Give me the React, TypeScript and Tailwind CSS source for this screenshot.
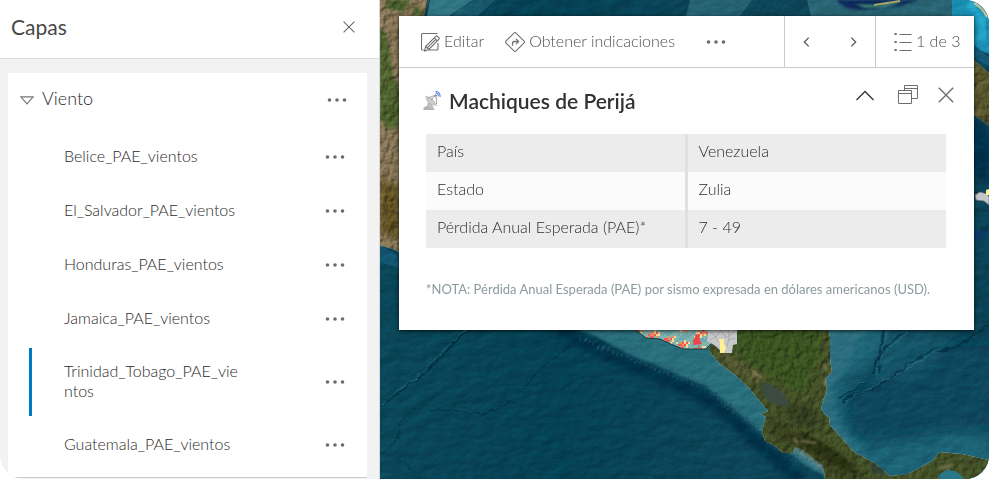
import React from "react";

const layers = [
  { name: "Belice_PAE_vientos" },
  { name: "El_Salvador_PAE_vientos" },
  { name: "Honduras_PAE_vientos" },
  { name: "Jamaica_PAE_vientos" },
  { name: "Trinidad_Tobago_PAE_vientos", selected: true },
  { name: "Guatemala_PAE_vientos" },
];

const facts = [
  ["País", "Venezuela"],
  ["Estado", "Zulia"],
  ["Pérdida Anual Esperada (PAE)*", "7 - 49"],
];

function Dots() {
  return (
    <svg width="20" height="6" viewBox="0 0 20 6" fill="currentColor" aria-hidden="true">
      <circle cx="2.5" cy="3" r="1.8" />
      <circle cx="10" cy="3" r="1.8" />
      <circle cx="17.5" cy="3" r="1.8" />
    </svg>
  );
}

function Cross({ size }: { size: number }) {
  return (
    <svg width={size} height={size} viewBox="0 0 16 16" fill="none" stroke="currentColor" strokeWidth="1.4" aria-hidden="true">
      <path d="M.8.8l14.4 14.4M15.2.8L.8 15.2" />
    </svg>
  );
}

function EditIcon() {
  return (
    <svg className="text-[#6e6e6e]" width="19" height="20" viewBox="0 0 19 20" fill="none" stroke="currentColor" strokeWidth="1.1" aria-hidden="true">
      <path d="M16.5 1.500h-15a1 1 0 0 0-1 1V17a1 1 0 0 0 1 1h1M7.5 18H16a1 1 0 0 0 1-1v-6" />
      <path d="M3.5 19l1.2-4.6L14.8 4.3q.8-.8 1.6 0l1.4 1.4q.8.8 0 1.6L7.7 17.5zM4.7 14.4l3 3M13.3 5.8l3 3M6.2 15.9l8.6-8.6M3.5 19l2.2-.6" />
    </svg>
  );
}

function DirectionsIcon() {
  return (
    <svg className="text-[#6e6e6e]" width="20" height="20" viewBox="0 0 20 20" fill="none" stroke="currentColor" strokeWidth="1.1" aria-hidden="true">
      <path d="M9.2.9q.8-.7 1.6 0l8.3 8.3q.7.8 0 1.6l-8.3 8.3q-.8.7-1.6 0L.9 10.8q-.7-.8 0-1.6z" />
      <path d="M7.5 13.8v-2.4q0-1.9 1.9-1.9h3.4" strokeWidth="1.3" />
      <path d="M11 7l2.7 2.5L11 12" />
    </svg>
  );
}

function ListIcon() {
  return (
    <svg className="text-[#6e6e6e]" width="18" height="20" viewBox="0 0 18 20" fill="none" stroke="currentColor" strokeWidth="1.2" aria-hidden="true">
      <path d="M5.5 2.500H17.500M5.500 10.500H17.500M5.500 18.500H17.500" />
      <path d="M.5 2h2.200M.5 10h2.200M.5 18h2.200" strokeWidth="2.200" />
    </svg>
  );
}

function WindowsIcon() {
  return (
    <svg width="20" height="20" viewBox="0 0 20 20" fill="none" stroke="currentColor" aria-hidden="true">
      <path d="M6.500 5.500V.5h13v13h-6M6.500 3.500h13" />
      <path d="M.5 5.500h13v13H.5zM.5 8.500h13" />
    </svg>
  );
}

function AntennaIcon() {
  return (
    <svg width="18" height="20" viewBox="0 0 18 20" fill="none" aria-hidden="true">
      <path d="M5 11l4 2 2 5H3z" fill="#c0c0c0" />
      <path d="M.5 19v-2.500l3-1.500 5 2.500 3 .5v1z" fill="#b4b4b4" />
      <path d="M3 5q-.5 8 10.500 9.500L9.500 8z" fill="#cdcdcd" stroke="#b0b0b0" strokeWidth=".7" />
      <path d="M8 9l5-5M5 7l8-3 .5 9" stroke="#999" strokeWidth=".9" />
      <circle cx="12.700" cy="4.500" r="1.100" fill="#888" />
      <path d="M12.500 2q3 0 3 3.300M12.500.5q5 .2 4.500 5.500" stroke="#4c82e8" strokeWidth="1.100" />
    </svg>
  );
}

function lossColor(col: number, row: number) {
  const v = Math.sin(col * 0.55 + row * 0.9) + Math.sin(col * 0.23 - row * 0.7) + Math.sin(col * 2.3 + row * 3.1) * 0.7;
  if (v > 1.7) return "#ee5a55";
  if (v > 1.2) return "#f08b68";
  if (v > 0.8) return "#f6dd8e";
  return v < -0.8 ? "#6ea9a9" : "#84b4ae";
}

function Mosaic() {
  const tiles = [];
  for (let row = 0; row < 13; row++) {
    for (let col = 0; col < 52; col++) {
      tiles.push(<rect key={`${row}-${col}`} x={234 + col * 2} y={326 + row * 2} width="2" height="2" fill={lossColor(col, row)} />);
    }
  }
  return <g clipPath="url(#municipal)">{tiles}</g>;
}

function SatelliteMap() {
  return (
    <svg
      className="absolute inset-0 h-full w-full"
      viewBox="0 0 609 479"
      preserveAspectRatio="xMinYMin slice"
      role="img"
      aria-label="Mapa satelital de Centroamérica"
    >
      <defs>
        <linearGradient id="sea" x1="0" y1="0" x2="1" y2="0">
          <stop offset="0" stopColor="#0a495b" />
          <stop offset=".3" stopColor="#054356" />
          <stop offset=".6" stopColor="#0e485c" />
          <stop offset="1" stopColor="#0b4458" />
        </linearGradient>
        <clipPath id="municipal">
          <path d="M242 325L256 330 266 338 280 339 293 345 303 349H326L332 343V325z" />
        </clipPath>
        <filter id="blur1"><feGaussianBlur stdDeviation="1" /></filter>
        <filter id="blur3"><feGaussianBlur stdDeviation="3" /></filter>
        <filter id="blur8"><feGaussianBlur stdDeviation="8" /></filter>
        <filter id="relief" x="0" y="0" width="100%" height="100%" colorInterpolationFilters="sRGB">
          <feTurbulence type="fractalNoise" baseFrequency=".06 .09" numOctaves="5" seed="8" />
          <feDiffuseLighting surfaceScale="1.300" diffuseConstant="1" lightingColor="#fff">
            <feDistantLight azimuth="230" elevation="27" />
          </feDiffuseLighting>
        </filter>
        <filter id="forest" x="0" y="0" width="100%" height="100%" colorInterpolationFilters="sRGB">
          <feTurbulence type="fractalNoise" baseFrequency=".16" numOctaves="4" seed="3" result="noise" />
          <feDiffuseLighting in="noise" surfaceScale="1.600" diffuseConstant="1" lightingColor="#fff" result="light">
            <feDistantLight azimuth="220" elevation="58" />
          </feDiffuseLighting>
          <feBlend in="SourceGraphic" in2="light" mode="multiply" />
          <feComposite in2="SourceGraphic" operator="in" />
        </filter>
        <filter id="rough" x="-10%" y="-10%" width="120%" height="120%">
          <feTurbulence type="fractalNoise" baseFrequency=".12" numOctaves="3" seed="4" />
          <feDisplacementMap in="SourceGraphic" scale="7" xChannelSelector="R" yChannelSelector="G" />
        </filter>
      </defs>

      <rect width="609" height="479" fill="url(#sea)" />

      {/* Caribbean depths */}
      <path d="M447 320H515L492 362 460 388 470 430 500 458 609 430V479H460L430 380z" fill="#226c7e" filter="url(#blur8)" />
      <path d="M470 402Q500 370 560 350L609 345V425L560 432 505 455 478 430z" fill="#0b4a60" filter="url(#blur8)" />
      <path d="M500 330H580L540 372 490 382z" fill="#1c6377" opacity=".6" filter="url(#blur8)" />
      <path d="M440 325H485L466 362 453 385 452 410 458 424 475 444 500 463 450 440 430 400z" fill="#2d7182" filter="url(#blur3)" />
      <path d="M478 446Q505 440 535 442L570 430 609 438V479H520z" fill="#1d6678" filter="url(#blur8)" />

      {/* Pacific shelf and trench */}
      <path d="M178 324L215 336 250 355 290 372 325 386 355 412 390 440 425 465 450 479V440L360 340 300 320z" fill="#2c6f7d" filter="url(#blur1)" />
      <path d="M168 320L195 338 240 361 290 381 320 395 345 412 370 436 395 458 420 479" fill="none" stroke="#03324a" strokeWidth="13" filter="url(#blur3)" />
      <path d="M200 338L245 356 290 374 325 388 355 412 390 440 420 463" fill="none" stroke="#1a5061" strokeWidth="5" strokeDasharray="2 3" opacity=".8" filter="url(#rough)" />

      {/* Submarine ridges */}
      <g fill="none" stroke="#02283a" filter="url(#rough)">
        <path d="M89 329L42 375 0 406" strokeWidth="1.500" opacity=".8" />
        <path d="M192 344L160 370 133 402 103 414 50 409" opacity=".7" />
        <path d="M35 407L20 424 18 438 0 455M17 459L38 473" opacity=".6" />
        <path d="M504 330L494 376 459 398M560 346L520 370 500 386 463 400M523 333L500 352 499 373M609 325L580 345 556 352" strokeWidth="2" opacity=".6" />
      </g>
      <g fill="none" stroke="#3b8796" opacity=".5" filter="url(#rough)">
        <path d="M87 328L40 373 0 405M507 331L497 374 461 395M560 349L520 373 464 402M527 333L504 352" />
      </g>

      {/* Yucatán corner */}
      <g filter="url(#forest)">
        <path d="M0 0H49L45 15 35 24 25 36V256L15 250 6 247 0 246z" fill="#a08d68" />
        <path d="M0 28L7 34 13 75 20 90V125L8 130 0 118z" fill="#5f7738" filter="url(#blur1)" />
        <path d="M0 180L20 186V240L0 232z" fill="#766429" filter="url(#blur3)" />
        <path d="M6 0H30L24 12 6 8zM35 4L45 16 33 15z" fill="#587337" filter="url(#blur1)" />
      </g>
      <path d="M50 0H93L69 16H47z" fill="#327785" />
      <path d="M93 0H115L98 16H70z" fill="#195b6d" />
      <path d="M48 0L45 16" stroke="#083543" strokeWidth="2" opacity=".7" />
      <path d="M0 247Q15 249 20 262V268L0 262z" fill="#1b6485" opacity=".6" />

      {/* Bahamas bank */}
      <path d="M310 0L306 16H360L372 0z" fill="#266474" />
      <path d="M427 0H575V17H431z" fill="#2a6675" />
      <path d="M457 0Q461 9 482 10L520 6 540 0z" fill="#0c2a5c" filter="url(#blur1)" />
      <path d="M474 4L500 5 527 0 507 7 486 8z" fill="#3f8775" filter="url(#blur1)" />
      <path d="M494 5L520 1" stroke="#a9a96c" strokeWidth="2" />
      <path d="M572 0H609V54L594 48 572 16z" fill="#1a8fb3" />
      <path d="M588 3Q600 10 604 31L600 42" fill="none" stroke="#2bb8d9" strokeWidth="6" filter="url(#blur3)" />
      <path d="M594 3Q602 7 607 17" fill="none" stroke="#cdbf98" strokeWidth="2" />
      <path d="M594 45L609 57V66L594 58z" fill="#155a78" />

      {/* Eastern islands */}
      <path d="M594 60L609 73V126L594 115z" fill="#6c6937" filter="url(#forest)" />
      <path d="M594 120L609 128V185L594 175z" fill="#04304e" filter="url(#blur3)" />
      <path d="M593 229L609 232 603 238 594 239z" fill="#103c6e" filter="url(#blur1)" />

      <rect width="609" height="479" filter="url(#relief)" className="opacity-40 mix-blend-soft-light" />

      <path d="M595 195l5-3 7 2 2 3v8l-5-4-8-1z" fill="#c5c8cb" stroke="#777" strokeWidth=".8" />
      <path d="M606 190l3-1v6h-3z" fill="#fff58c" />

      {/* Isthmus */}
      <g filter="url(#forest)">
        <path d="M330 325H448L450 338 450 359 452 372 445 379 447 391 443 401 441 409 444 414 449 417 450 425 465 442 474 452 495 463 510 476 528 474 552 461 560 452 582 454 609 460V479H579L568 469 558 476 559 479H445L443 466 424 450 415 447 413 453 403 453 395 446 385 441 382 432 384 423 386 417 381 414 388 411 382 404 369 388 354 374 339 363 329 351z" fill="#50602f" />
        <path d="M350 325H440L440 350 432 375 424 395 397 378 372 365 354 345z" fill="#446325" filter="url(#blur3)" />
        <path d="M388 414L417 431 460 455 480 468 488 479H460L439 465 414 447 393 438z" fill="#424b20" filter="url(#blur3)" />
        <path d="M342 353L361 365 383 376 378 384 358 371 341 360z" fill="#6d6c3e" filter="url(#blur3)" />
        <path d="M400 405L428 404 442 420 432 430 410 420z" fill="#3d4a26" filter="url(#blur3)" />
        <path d="M420 430L448 446 470 462 476 474 450 462 424 446z" fill="#303a17" filter="url(#blur1)" />
      </g>
      <path d="M380 382L391 384 403 393 410 406 400 406 389 402 382 394z" fill="#3a4b40" filter="url(#blur1)" />
      <path d="M444 364l2 7M445 379v8M414 439l4 4M372 371l10 7" fill="none" stroke="#a38f70" strokeWidth="2.500" opacity=".6" filter="url(#blur1)" />
      <path d="M422 441l14 2M560 468l12-3" fill="none" stroke="#a38f70" strokeWidth="2" opacity=".7" filter="url(#blur1)" />
      <path d="M488 463l15 5 2 8-10-3z" fill="#203b44" opacity=".6" filter="url(#blur1)" />
      <path d="M560 474Q575 465 584 479H560z" fill="#28788a" />

      {/* Municipal loss classification */}
      <Mosaic />
      <path d="M242 325L256 330 266 338 280 339 293 345 303 349H326L332 343" fill="none" stroke="#123a40" />
      <path d="M313 341l2-4 1-3 3 1 1 6 2 3-8 1z" fill="#f04448" />
      <path d="M327 325h30v19l-4 1-1 8h-11l-2-4-5-4-7-4 1-6z" fill="#c8c8ca" />
      <path d="M339 339h5v5l2 3-2 6h-4v-9z" fill="#fff091" />
      <path d="M330 332l6 5 5-7 5 8 9-7M330 340l5-3 4 5M349 330v8l-2 9M355 338l-7 2" fill="none" stroke="#96999c" strokeWidth=".6" />
    </svg>
  );
}

export default function App() {
  return (
    <div className="flex h-screen min-h-[400px] overflow-hidden rounded-[24px] rounded-tl-none bg-white font-[Lato,sans-serif] font-light text-[#2b2b2b]">
      <aside className="flex w-[380px] shrink-0 flex-col border-r border-[#d9d9d9] bg-[#f2f2f2]" aria-label="Capas">
        <header className="flex h-[59px] shrink-0 items-center justify-between border-b border-[#dcdcdc] bg-white pr-6 pl-[11px] pb-1">
          <h1 className="text-[21px] font-normal text-[#484848]">Capas</h1>
          <button type="button" aria-label="Cerrar capas" className="text-[#686868]"><Cross size={12} /></button>
        </header>
        <div className="flex-1 pt-[14px] pr-3 pl-2">
          <section className="border-b border-[#ccc] bg-white pb-[5px]">
            <div className="flex h-[57px] items-center justify-between pr-5 pl-3 pb-1">
              <button type="button" aria-expanded="true" className="flex items-center gap-2 pb-0.5 text-[18px]">
                <svg width="14" height="9" viewBox="0 0 14 9" fill="none" stroke="#777" strokeWidth="1.2" className="mt-1" aria-hidden="true"><path d="M.8.8h12.400L7 7.800z" /></svg>
                Viento
              </button>
              <button type="button" aria-label="Opciones de Viento" className="text-[#6b6b6b]"><Dots /></button>
            </div>
            <ul>
              {layers.map((layer) => (
                <li key={layer.name} className={`ml-[21px] flex items-center justify-between pr-[22px] pl-8 ${layer.selected ? "my-0.5 min-h-[68px] border-l-3 border-[#007ac2]" : "min-h-[54px] border-l-3 border-transparent"}`}>
                  <span className="w-[182px] pb-0.5 text-[16px] leading-5 break-all">{layer.name}</span>
                  <button type="button" aria-label={`Opciones de ${layer.name}`} className="text-[#6b6b6b]"><Dots /></button>
                </li>
              ))}
            </ul>
          </section>
        </div>
      </aside>

      <main className="relative min-w-0 flex-1 overflow-hidden">
        <SatelliteMap />
        <article className="relative mt-4 mr-[15px] ml-[19px] bg-white shadow-[0_1px_4px_rgba(0,0,0,0.8)]">
          <div className="flex h-[52px] border-b border-[#cacaca] pb-0 text-[16px] text-[#505050]">
            <div className="flex flex-1 items-center gap-[21px] pl-[22px]">
              <button type="button" className="flex items-center gap-1"><EditIcon /><span className="pb-0.5">Editar</span></button>
              <button type="button" className="flex items-center gap-1 whitespace-nowrap"><DirectionsIcon /><span className="pb-0.5">Obtener indicaciones</span></button>
              <button type="button" aria-label="Más opciones" className="ml-2.5 text-[#6b6b6b]"><Dots /></button>
            </div>
            <div className="flex w-[91px] items-center justify-between border-l border-[#cacaca] px-[18px]">
              <button type="button" aria-label="Anterior"><svg width="7" height="12" viewBox="0 0 8 12" fill="none" stroke="currentColor" strokeWidth="1.400" aria-hidden="true"><path d="M6.500 1L1.500 6l5 5" /></svg></button>
              <button type="button" aria-label="Siguiente"><svg width="7" height="12" viewBox="0 0 8 12" fill="none" stroke="currentColor" strokeWidth="1.400" aria-hidden="true"><path d="M1.500 1l5 5-5 5" /></svg></button>
            </div>
            <button type="button" className="flex w-[99px] items-center gap-1 border-l border-[#cacaca] pl-[18px] whitespace-nowrap"><ListIcon /><span className="pb-0.5">1 de 3</span></button>
          </div>
          <header className="flex h-[66px] items-center pr-5 pl-6">
            <AntennaIcon />
            <h2 className="ml-2 text-[21px] font-semibold text-[#323232]">Machiques de Perijá</h2>
            <div className="mb-3 ml-auto flex items-center text-[#6e6e6e]">
              <button type="button" aria-label="Contraer" className="text-[#323232]"><svg width="18" height="11" viewBox="0 0 18 11" fill="none" stroke="currentColor" strokeWidth="1.300" aria-hidden="true"><path d="M.5 10L9 1.500 17.500 10" /></svg></button>
              <button type="button" aria-label="Acoplar" className="ml-6"><WindowsIcon /></button>
              <button type="button" aria-label="Cerrar" className="ml-5"><Cross size={16} /></button>
            </div>
          </header>
          <div className="pr-7 pb-8 pl-[27px]">
            <table className="w-full table-fixed border-collapse text-left text-[16px]">
              <tbody>
                {facts.map(([label, value]) => (
                  <tr key={label} className="h-[38px] odd:bg-[#ececec] even:bg-[#fbfbfb]">
                    <th scope="row" className="w-1/2 border-r-3 border-[#e0e0e0] px-[11px] pb-1 font-light">{label}</th>
                    <td className="px-[11px] pb-1">{value}</td>
                  </tr>
                ))}
              </tbody>
            </table>
            <p className="mt-8 text-[13px] leading-[18px] font-normal text-[#8c9b9d]">*NOTA: Pérdida Anual Esperada (PAE) por sismo expresada en dólares americanos (USD).</p>
          </div>
        </article>
      </main>
    </div>
  );
}
